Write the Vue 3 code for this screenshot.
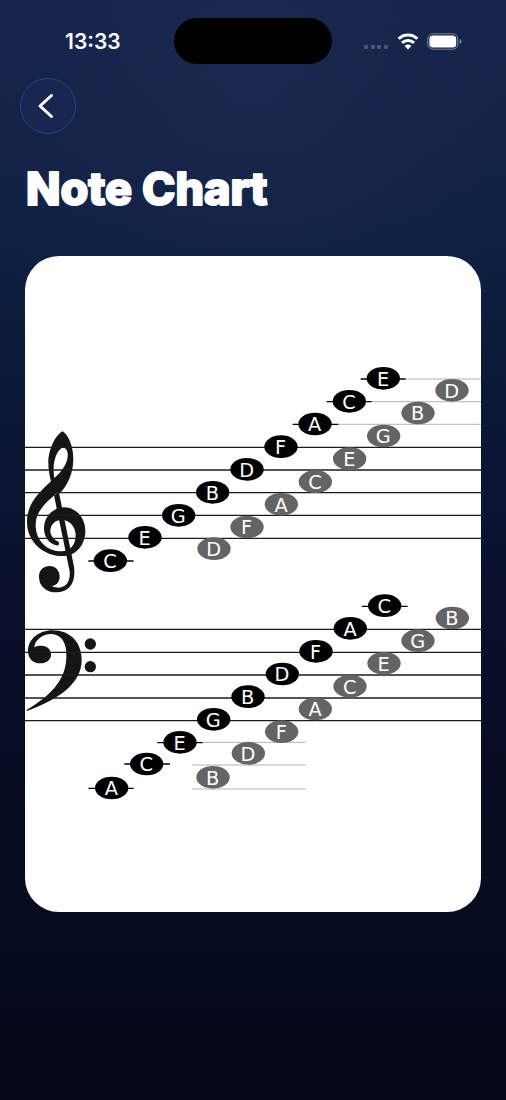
<template>
    <main class="screen">
        <!-- Barre d'état -->
        <header class="status">
            <time class="status__time">13:33</time>
            <div class="status__island"></div>
            <div class="status__icons">
                <svg class="status__signal" viewBox="0 0 26 6" aria-hidden="true">
                    <circle v-for="x in [3, 10, 16, 23]" :key="x" :cx="x" cy="3" r="2.2" />
                </svg>
                <svg class="status__wifi" viewBox="0 0 22 17" aria-hidden="true">
                    <path d="M1.6 5.8a13.4 13.4 0 0 1 18.8 0" />
                    <path d="M5 9.9a8.5 8.5 0 0 1 12 0" />
                    <path class="status__wifi-dot" d="M11 16.4 7.6 13a4.8 4.8 0 0 1 6.8 0Z" />
                </svg>
                <svg class="status__battery" viewBox="0 0 35 17" aria-hidden="true">
                    <rect class="status__battery-case" x="0.8" y="0.8" width="30" height="15.4" rx="5" />
                    <rect x="2.4" y="2.4" width="26.8" height="12.2" rx="3.6" />
                    <path class="status__battery-cap" d="M32.6 6Q34.6 6.5 34.6 8.5T32.6 11Z" />
                </svg>
            </div>
        </header>

        <button class="back" type="button" aria-label="Back">
            <svg viewBox="0 0 24 28" aria-hidden="true">
                <path d="M17.5 3.5 6 14l11.5 10.5" />
            </svg>
        </button>

        <h1 class="title">
            <svg class="title__svg" viewBox="0 0 300 56">
                <text x="1" y="43">Note Chart</text>
            </svg>
        </h1>

        <section class="card">
            <svg class="chart" viewBox="0 0 1368 1968" role="img" aria-label="Note Chart">
                <!-- Clé de sol -->
                <g class="clef" transform="translate(-30 492)">
                    <path
                        fill-rule="evenodd"
                        d="M143 34C122 44 100 88 100 128C100 150 104 168 108 184C66 222 36 255 36 305C36 368 88 408 142 408C186 408 211 372 211 332C211 292 182 262 148 262C112 262 87 292 87 325C87 352 104 372 124 376C134 378 134 368 128 364C114 358 106 344 106 334C106 314 120 300 140 300C166 300 182 322 182 346C182 374 166 394 140 394C96 394 62 362 62 314C62 276 90 250 122 222L134 220C158 196 175 160 175 116C175 80 160 44 143 34ZM118 174C112 140 118 100 140 84C152 80 160 92 158 110C156 135 136 158 118 174Z"
                    />
                    <path d="M117 226L132 218L177 440C184 490 160 517 124 517C95 517 72 500 72 470C72 448 88 438 103 438C122 438 134 452 134 470C134 486 124 496 110 498C134 510 168 502 164 454Z" />
                </g>

                <!-- Clé de fa -->
                <g class="clef" transform="translate(-30 1062)">
                    <path d="M34 304L36 299C104 258 153 212 154 140C156 100 140 72 108 72C84 72 58 90 58 112C64 108 72 107 80 107C96 107 108 118 108 134C108 150 94 160 76 160C54 160 39 146 39 122C39 88 72 61 112 61C165 61 200 96 200 150C200 226 120 272 34 304Z" />
                    <circle cx="226" cy="102" r="17" />
                    <circle cx="226" cy="170" r="17" />
                </g>

                <line v-for="y in staffLines" :key="y" class="staff" x1="0" :y1="y" x2="1368" :y2="y" />
                <line v-for="l in guides" :key="l.y" class="guide" :x1="l.from" :y1="l.y" :x2="l.to" :y2="l.y" />
                <line v-for="l in ledgers" :key="l.y" class="ledger" :x1="l.from" :y1="l.y" :x2="l.to" :y2="l.y" />

                <g v-for="n in notes" :key="n.x + '-' + n.y" class="note" :class="{ 'note--space': n.space }">
                    <ellipse :cx="n.x" :cy="n.y" rx="50" ry="34" />
                    <text :x="n.x - 1" :y="n.y + 22">{{ n.name }}</text>
                </g>
            </svg>
        </section>
    </main>
</template>

<script setup>
const staffLines = [574, 642, 710, 778, 847, 1120, 1189, 1257, 1326, 1394];

const ledgers = [
    { from: 1007, to: 1142, y: 369 },
    { from: 905, to: 1040, y: 437 },
    { from: 803, to: 940, y: 505 },
    { from: 190, to: 326, y: 915 },
    { from: 1011, to: 1148, y: 1051 },
    { from: 397, to: 533, y: 1460 },
    { from: 298, to: 435, y: 1524 },
    { from: 190, to: 326, y: 1597 },
];

const guides = [
    { from: 1142, to: 1368, y: 369 },
    { from: 1040, to: 1368, y: 437 },
    { from: 940, to: 1368, y: 505 },
    { from: 533, to: 842, y: 1459 },
    { from: 501, to: 842, y: 1527 },
    { from: 501, to: 842, y: 1599 },
];

const notes = [
    // Clé de sol, lignes
    { name: 'C', x: 256, y: 914 },
    { name: 'E', x: 360, y: 844 },
    { name: 'G', x: 461, y: 778 },
    { name: 'B', x: 563, y: 709 },
    { name: 'D', x: 666, y: 640 },
    { name: 'F', x: 768, y: 572 },
    { name: 'A', x: 870, y: 504 },
    { name: 'C', x: 973, y: 436 },
    { name: 'E', x: 1075, y: 367 },
    // Clé de sol, interlignes
    { name: 'D', x: 567, y: 878, space: true },
    { name: 'F', x: 666, y: 813, space: true },
    { name: 'A', x: 769, y: 745, space: true },
    { name: 'C', x: 871, y: 677, space: true },
    { name: 'E', x: 974, y: 608, space: true },
    { name: 'G', x: 1076, y: 540, space: true },
    { name: 'B', x: 1179, y: 471, space: true },
    { name: 'D', x: 1281, y: 403, space: true },
    // Clé de fa, lignes
    { name: 'A', x: 260, y: 1596 },
    { name: 'C', x: 365, y: 1524 },
    { name: 'E', x: 465, y: 1459 },
    { name: 'G', x: 566, y: 1390 },
    { name: 'B', x: 669, y: 1322 },
    { name: 'D', x: 772, y: 1254 },
    { name: 'F', x: 873, y: 1186 },
    { name: 'A', x: 976, y: 1117 },
    { name: 'C', x: 1079, y: 1049 },
    // Clé de fa, interlignes
    { name: 'B', x: 564, y: 1564, space: true },
    { name: 'D', x: 670, y: 1492, space: true },
    { name: 'F', x: 770, y: 1427, space: true },
    { name: 'A', x: 871, y: 1359, space: true },
    { name: 'C', x: 975, y: 1291, space: true },
    { name: 'E', x: 1077, y: 1222, space: true },
    { name: 'G', x: 1179, y: 1154, space: true },
    { name: 'B', x: 1282, y: 1086, space: true },
];
</script>

<style>
body {
    margin: 0;
    background: #040819;
}
</style>

<style scoped>
.screen {
    box-sizing: border-box;
    min-height: 100vh;
    padding: 18px 25px 40px;
    font-family: Inter, "Liberation Sans", sans-serif;
    color: #fff;
    background:
        radial-gradient(ellipse 75% 30% at 50% 7%, rgba(30, 42, 82, 0.7), transparent),
        linear-gradient(180deg, #14234a 0%, #0c2040 22%, #0a1533 42%, #0a0d28 60%, #070c1f 82%, #030718 100%);
}

/* ── Barre d'état ──────────────────────────────── */
.status {
    display: grid;
    grid-template-columns: 1fr 158px 1fr;
    align-items: center;
}

.status__time {
    padding: 2px 0 0 40px;
    font-size: 21px;
    font-weight: 600;
    line-height: 24px;
}

.status__island {
    height: 46px;
    border-radius: 23px;
    background: #000;
}

.status__icons {
    display: flex;
    align-items: center;
    justify-content: flex-end;
    gap: 8px;
    padding-right: 19px;
    fill: #fff;
}

.status__signal {
    width: 26px;
    height: 6px;
    margin-top: 12px;
    fill: #4e587a;
}

.status__wifi {
    width: 22px;
    height: 17px;
    fill: none;
    stroke: #fff;
    stroke-width: 3;
}

.status__wifi-dot {
    fill: #fff;
    stroke: none;
}

.status__battery {
    width: 35px;
    height: 17px;
}

.status__battery-case {
    fill: none;
    stroke: #7b839d;
    stroke-width: 1;
}

.status__battery-cap { fill: #7b839d; }

/* ── Retour ────────────────────────────────────── */
.back {
    display: flex;
    align-items: center;
    justify-content: center;
    width: 56px;
    height: 56px;
    margin: 14px 0 0 -5px;
    padding: 0;
    border: 1px solid #254489;
    border-radius: 50%;
    background: #182652;
    cursor: pointer;
}

.back svg {
    width: 24px;
    height: 28px;
    margin-right: 4px;
    fill: none;
    stroke: #fff;
    stroke-width: 3;
    stroke-linecap: round;
    stroke-linejoin: round;
}

/* ── Titre ─────────────────────────────────────── */
.title {
    margin: 28px 0 38px;
    height: 56px;
}

.title__svg {
    display: block;
    width: 300px;
    height: 56px;
    font-size: 45px;
    font-weight: 800;
    fill: #fff;
    stroke: #fff;
    stroke-width: 2;
    stroke-linejoin: round;
}

/* ── Carte ─────────────────────────────────────── */
.card {
    overflow: hidden;
    border-radius: 34px;
    background: #fff;
}

.chart {
    display: block;
    width: 100%;
}

.clef { fill: #141514; }

.staff {
    stroke: #1c1c1e;
    stroke-width: 4;
}

.ledger {
    stroke: #000;
    stroke-width: 4;
}

.guide {
    stroke: #8c8c8c;
    stroke-width: 2;
}

.note text {
    fill: #fff;
    font-family: "DejaVu Sans", sans-serif;
    font-size: 58px;
    text-anchor: middle;
}

.note--space ellipse { fill: #646464; }
</style>
